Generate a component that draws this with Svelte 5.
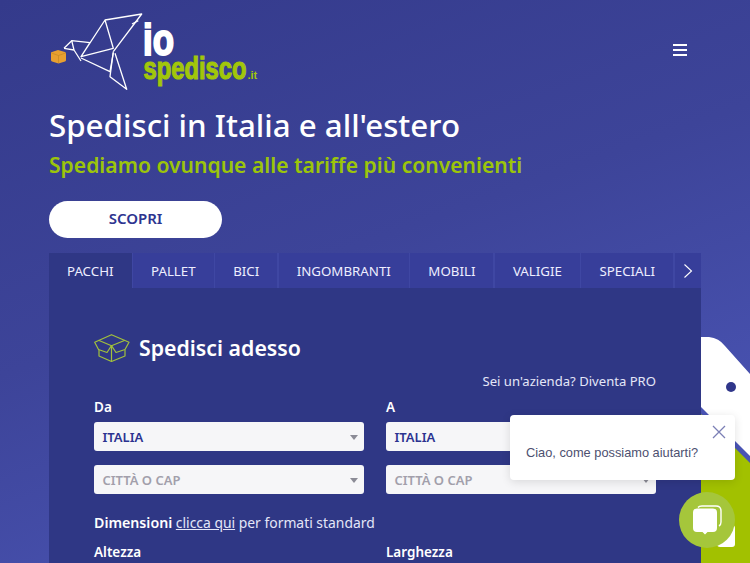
<script lang="ts">
  const tabs = ['PACCHI', 'PALLET', 'BICI', 'INGOMBRANTI', 'MOBILI', 'VALIGIE', 'SPECIALI'];
</script>

<div class="page">
  <div class="deco" aria-hidden="true">
    <svg width="49" height="226" viewBox="0 0 49 226">
      <path d="M0 0 H8 Q18 1 24 9 L49 37 V226 H0 Z" fill="#fff" />
      <path d="M0 70 L49 119 V226 H0 Z" fill="#4a54b5" />
      <path d="M0 77 L49 126 V226 H0 Z" fill="#a2c100" />
      <circle cx="30" cy="50" r="5" fill="#30368a" />
    </svg>
  </div>

  <header class="top">
    <svg class="logo" width="212" height="84" viewBox="49 8 212 84">
      <g fill="none" stroke="#fff" stroke-width="1.3" stroke-linejoin="round">
        <path d="M64 48.3 L71.7 40.7 L90 42.7 L81 56.7 L105 20 L141.7 14 L113.3 51.7 M105 20 L113.3 48.3 L81 56.7" />
        <path d="M64 48.3 L74 50 L71.7 40.7 M74 50 L81 61 M81 58 L110 71.7 L113.3 53" />
        <path d="M138.3 20.7 L132 24 M113.3 51.7 L110 76.7 L126.7 89.3 L115 53.3" />
      </g>
      <path d="M51 53 Q51 52 52 52 L58 50 L65 52 Q66 52.5 66 54 V60 Q66 61 65 61.5 L58.5 63.5 L52 61.5 Q51 61 51 60 Z" fill="#e8a030" />
      <path d="M51.5 53 L58.5 55.5 L65.5 53 M58.5 55.5 V63" stroke="#c48822" stroke-width="0.7" fill="none" />
      <text class="io" transform="translate(143 55) scale(0.775 1)">io</text>
      <text class="spedisco" transform="translate(143.5 79) scale(0.766 1)">spedisco</text>
      <text class="tld" x="247.5" y="79">.it</text>
    </svg>
    <button class="burger" aria-label="Menu"><span></span><span></span><span></span></button>
  </header>

  <section class="hero">
    <h1>Spedisci in Italia e all'estero</h1>
    <h2>Spediamo ovunque alle tariffe più convenienti</h2>
    <button class="cta">SCOPRI</button>
  </section>

  <div class="panel">
    <nav class="tabs">
      {#each tabs as tab, i}
        <div class="tab" class:active={i === 0}>{tab}</div>
      {/each}
      <div class="tab arrow">
        <svg width="10" height="16" viewBox="0 0 10 16"><path d="M1.5 1.5 L8.5 8 L1.5 14.5" fill="none" stroke="#fff" stroke-width="1.1" /></svg>
      </div>
    </nav>

    <div class="body">
      <div class="title">
        <svg width="36" height="29" viewBox="0 0 36 29" fill="none" stroke="#a2c13c" stroke-width="1.2" stroke-linejoin="round">
          <path d="M17.5 0.7 L35 8.3 L31 15.5 L22 18.5 L17.5 11.7 L13 18.5 L4.5 15.5 L0.7 8.3 Z" />
          <path d="M4.5 6.3 L17.5 11.7 L31 6.3" />
          <path d="M5 16 V22 L17.5 27.5 L31 22 V16" />
          <path d="M17.5 11.7 V27.5" />
        </svg>
        <h3>Spedisci adesso</h3>
      </div>
      <div class="pro">Sei un'azienda? Diventa PRO</div>

      <div class="grid">
        <div class="col">
          <div class="label">Da</div>
          <div class="select value">ITALIA<i></i></div>
          <div class="select">CITTÀ O CAP<i></i></div>
        </div>
        <div class="col">
          <div class="label">A</div>
          <div class="select value">ITALIA<i></i></div>
          <div class="select">CITTÀ O CAP<i></i></div>
        </div>
      </div>

      <div class="dims"><b>Dimensioni</b> <u>clicca qui</u> per formati standard</div>

      <div class="grid">
        <div class="col">
          <div class="label">Altezza</div>
          <div class="select"></div>
        </div>
        <div class="col">
          <div class="label">Larghezza</div>
          <div class="select"></div>
        </div>
      </div>
    </div>
  </div>

  <div class="bubble">
    <span>Ciao, come possiamo aiutarti?</span>
    <svg class="close" width="14" height="14" viewBox="0 0 14 14"><path d="M1 1 L13 13 M13 1 L1 13" stroke="#7b7fb5" stroke-width="1.3" /></svg>
  </div>
  <div class="corner"></div>
  <div class="chat">
    <svg width="30" height="30" viewBox="0 0 30 30">
      <path d="M6 2.5 Q7 1 10 1 H24 Q29 1 29 6 V17 Q29 20 27 21" fill="none" stroke="#fff" stroke-width="1.4" />
      <path d="M5 3.5 H21 Q25 3.5 25 7.5 V23 Q25 27 21 27 H15.5 L13 29.5 L10.5 27 H5 Q1 27 1 23 V7.5 Q1 3.5 5 3.5 Z" fill="#fff" />
    </svg>
  </div>
</div>

<style>
  :global(body) {
    margin: 0;
  }

  .page {
    position: relative;
    width: 750px;
    height: 563px;
    overflow: hidden;
    background: linear-gradient(160deg, #343a8b 0%, #3d4499 45%, #4e59bc 100%);
    font-family: "Noto Sans", "Open Sans", sans-serif;
    color: #fff;
  }

  .deco {
    position: absolute;
    right: 0;
    top: 337px;
    line-height: 0;
  }

  .top {
    display: flex;
    justify-content: space-between;
    align-items: flex-start;
    padding: 8px 63px 0 49px;
    height: 94px;
    box-sizing: border-box;
  }

  .logo {
    display: block;
  }

  .logo text {
    font-family: "Liberation Sans", sans-serif;
    font-weight: 700;
  }

  .io {
    font-size: 45px;
    fill: #fff;
    stroke: #fff;
    stroke-width: 2px;
  }

  .spedisco {
    font-size: 31px;
    fill: #a2c60a;
    stroke: #a2c60a;
    stroke-width: 1.2px;
  }

  .tld {
    font-size: 11px;
    fill: #a2c60a;
  }

  .burger {
    display: flex;
    flex-direction: column;
    gap: 3.5px;
    width: 14px;
    margin-top: 36px;
    padding: 0;
    border: 0;
    background: none;
  }

  .burger span {
    display: block;
    height: 1.5px;
    background: #fff;
  }

  .hero {
    padding: 9px 49px 0;
  }

  .hero h1 {
    margin: 0;
    font-size: 31.3px;
    line-height: 44px;
    font-weight: 500;
  }

  .hero h2 {
    margin: 1px 0 0;
    font-size: 21.1px;
    line-height: 34px;
    font-weight: 600;
    color: #9cc50a;
  }

  .cta {
    display: block;
    width: 173px;
    height: 37px;
    margin-top: 19px;
    padding: 0 0 3px;
    border: 0;
    border-radius: 19px;
    background: #fff;
    color: #2e3590;
    font-family: inherit;
    font-size: 15px;
    font-weight: 600;
  }

  .panel {
    width: 652px;
    margin: 15px 0 0 49px;
    background: #2f3785;
  }

  .tabs {
    display: flex;
    height: 35px;
    gap: 1.5px;
    background: #3f47a3;
  }

  .tab {
    display: flex;
    align-items: center;
    justify-content: center;
    padding: 0 18px;
    background: #373e9a;
    font-size: 13.3px;
    color: #eef;
    white-space: nowrap;
  }

  .tab.active {
    background: #2f3785;
  }

  .tab.arrow {
    flex: 1;
    padding: 0;
  }

  .body {
    padding: 42px 45px 0;
  }

  .title {
    display: flex;
    align-items: center;
    gap: 9px;
  }

  .title h3 {
    margin: 0;
    font-size: 21.3px;
    font-weight: 600;
    line-height: 36px;
  }

  .pro {
    margin-top: 5px;
    text-align: right;
    font-size: 13.1px;
    line-height: 20px;
    color: #e4e6f8;
  }

  .grid {
    display: grid;
    grid-template-columns: 270px 270px;
    gap: 22px;
  }

  .label {
    font-size: 13.5px;
    font-weight: 600;
    line-height: 19px;
    margin-top: 7px;
    margin-bottom: 5px;
  }

  .select {
    position: relative;
    height: 29px;
    margin-bottom: 14px;
    padding-left: 8.5px;
    border-radius: 3px;
    background: #f6f6f8;
    font-size: 13px;
    font-weight: 600;
    line-height: 30px;
    color: #a29fab;
  }

  .select.value {
    color: #2b3390;
  }

  .select i {
    position: absolute;
    right: 6px;
    top: 13px;
    border: 4px solid transparent;
    border-top: 5px solid #8b8b96;
    border-bottom: 0;
  }

  .dims {
    margin-top: 4px;
    font-size: 13.9px;
    line-height: 22px;
    color: #e4e6f8;
  }

  .dims b {
    font-weight: 600;
    font-size: 14.2px;
    color: #fff;
  }

  .dims + .grid {
    margin-top: 2px;
  }

  .bubble {
    position: absolute;
    left: 510px;
    top: 415px;
    width: 225px;
    height: 65px;
    box-sizing: border-box;
    padding: 29px 0 0 16px;
    border-radius: 4px;
    background: #fff;
    box-shadow: 0 2px 10px rgba(0, 0, 0, 0.12);
    font-family: "Liberation Sans", Arial, sans-serif;
    font-size: 12.8px;
    line-height: 18px;
    color: #4d5070;
  }

  .close {
    position: absolute;
    right: 9px;
    top: 10px;
  }

  .corner {
    position: absolute;
    left: 717px;
    top: 525px;
    width: 18px;
    height: 22px;
    border-radius: 3px;
    background: #fff;
  }

  .chat {
    position: absolute;
    left: 679px;
    top: 492px;
    width: 56px;
    height: 56px;
    border-radius: 50%;
    background: #a5c63b;
    display: flex;
    align-items: center;
    justify-content: center;
  }
</style>
